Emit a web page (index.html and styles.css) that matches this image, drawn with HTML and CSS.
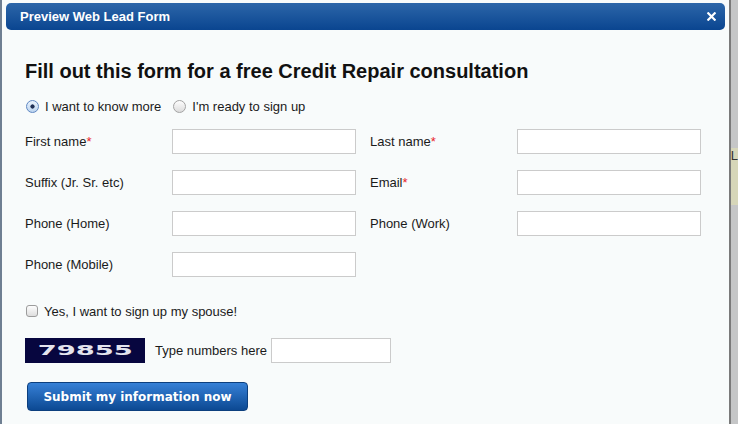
FILE: index.html
```html
<!DOCTYPE html>
<html lang="en">
<head>
  <meta charset="UTF-8">
  <meta name="viewport" content="width=device-width, initial-scale=1.0">
  <title>Preview Web Lead Form</title>
  <link rel="stylesheet" href="styles.css">
</head>
<body>
  <div class="backdrop-left"></div>

  <div class="dialog">
    <div class="titlebar">
      <span class="title">Preview Web Lead Form</span>
      <svg class="close" width="9" height="9" viewBox="0 0 9 9">
        <path d="M1.3 1.3 L7.7 7.7 M7.7 1.3 L1.3 7.7" stroke="#fff" stroke-width="2.2" stroke-linecap="square"/>
      </svg>
    </div>

    <div class="content">
      <h1>Fill out this form for a free Credit Repair consultation</h1>

      <div class="choice-row">
        <label class="choice"><input type="radio" name="intent" checked> I want to know more</label>
        <label class="choice"><input type="radio" name="intent"> I'm ready to sign up</label>
      </div>

      <div class="fields">
        <label>First name<span class="req">*</span></label>
        <input type="text">
        <label>Last name<span class="req">*</span></label>
        <input type="text">

        <label>Suffix (Jr. Sr. etc)</label>
        <input type="text">
        <label>Email<span class="req">*</span></label>
        <input type="text">

        <label>Phone (Home)</label>
        <input type="text">
        <label>Phone (Work)</label>
        <input type="text">

        <label>Phone (Mobile)</label>
        <input type="text">
      </div>

      <label class="spouse"><input type="checkbox"> Yes, I want to sign up my spouse!</label>

      <div class="captcha-row">
        <div class="captcha"><span>79855</span></div>
        <span class="captcha-label">Type numbers here</span>
        <input type="text" class="captcha-input">
      </div>

      <button class="submit">Submit my information now</button>
    </div>
  </div>

  <div class="backdrop-right">
    <div class="note">L</div>
  </div>
</body>
</html>
```

FILE: styles.css
```css
body {
  margin: 0;
  height: 424px;
  overflow: hidden;
  display: flex;
  background: #c9cacb;
  font-family: "Liberation Sans", Arial, sans-serif;
  font-size: 13px;
  color: #1a1a1a;
}
.backdrop-left {
  width: 2px;
  background: #6f7f92;
}
.dialog {
  width: 724px;
  padding: 3px 4px 0;
  background: #f8fbfb;
  border-right: 2px solid #7a7a7a;
}
.titlebar {
  height: 27px;
  border-radius: 5px;
  background: linear-gradient(#2c66a9, #0a4590);
  display: flex;
  align-items: center;
  justify-content: space-between;
  padding: 0 9px 0 14px;
}
.title {
  color: #fff;
  font-weight: bold;
  font-size: 13px;
}
.close {
  display: block;
}
.content {
  padding: 0 19px;
}
h1 {
  margin: 29px 0 0;
  font-size: 20px;
  line-height: 24px;
  color: #111;
}
.choice-row {
  margin-top: 13px;
  height: 20px;
  display: flex;
  align-items: center;
  gap: 11px;
}
.choice, .spouse {
  display: flex;
  align-items: center;
  gap: 6px;
}
input[type="radio"] {
  appearance: none;
  margin: 0 0 0 1px;
  width: 13px;
  height: 13px;
  border-radius: 50%;
  border: 1px solid #a3a3a3;
  background: linear-gradient(#fdfdfd, #dcdcdc);
}
input[type="radio"]:checked {
  border-color: #5f87c2;
  background: radial-gradient(circle, #1e2f55 0 1.8px, transparent 2.4px), linear-gradient(#eaf3fd, #bcd4ef);
}
input[type="checkbox"] {
  appearance: none;
  margin: 0 0 0 1px;
  width: 12px;
  height: 12px;
  border-radius: 3px;
  border: 1px solid #9c9c9c;
  background: linear-gradient(#fdfdfd, #dedede);
}
.fields {
  margin-top: 13px;
  display: grid;
  grid-template-columns: 147px 184px 147px 184px;
  grid-auto-rows: 25px;
  row-gap: 16px;
}
.fields label {
  display: flex;
  align-items: center;
}
.fields label:nth-child(4n+3) {
  margin-left: 14px;
}
.fields input:nth-child(4n+4) {
  margin-left: 14px;
}
.fields input {
  width: 184px;
}
input[type="text"] {
  box-sizing: border-box;
  height: 25px;
  margin: 0;
  border: 1px solid #cbcbcb;
  background: #fff;
}
.req {
  color: #e8242b;
}
.spouse {
  margin-top: 24px;
  height: 20px;
}
.captcha-row {
  margin-top: 16px;
  display: flex;
  align-items: center;
  height: 26px;
}
.captcha {
  width: 120px;
  height: 25px;
  background: #07063f;
  display: flex;
  align-items: center;
  justify-content: center;
  overflow: hidden;
}
.captcha span {
  color: #e4e4ee;
  font-family: "DejaVu Sans", sans-serif;
  font-weight: bold;
  font-size: 14px;
  transform: scaleX(1.95);
}
.captcha-label {
  margin: 0 4px 0 10px;
}
.captcha-input {
  width: 120px;
}
.submit {
  margin: 19px 0 0 2px;
  width: 221px;
  height: 29px;
  padding: 0;
  border: 1px solid #0c3f7e;
  border-radius: 4px;
  background: linear-gradient(#3680d6, #0c4993);
  color: #fff;
  font-family: "DejaVu Sans", sans-serif;
  font-weight: bold;
  font-size: 12px;
  white-space: nowrap;
}
.backdrop-right {
  flex: 1;
  background: #c5c6c7;
  padding-top: 148px;
}
.note {
  height: 57px;
  background: #d6d6b9;
  color: #333;
  font-size: 13px;
  overflow: hidden;
}
```
